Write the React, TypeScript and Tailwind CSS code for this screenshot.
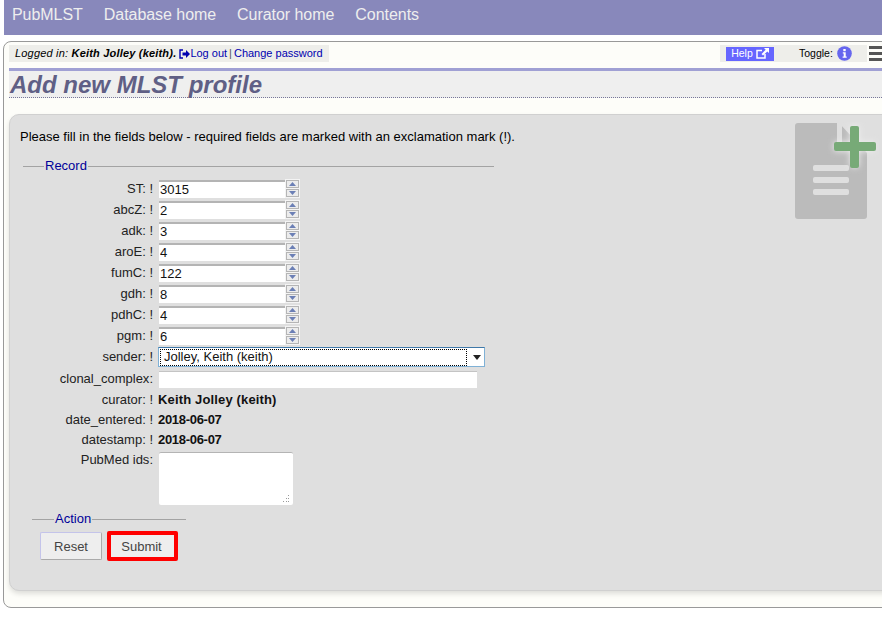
import React from "react";

const FONT = { fontFamily: '"Liberation Sans", Arial, sans-serif' };

function Spin() {
  return (
    <div className="flex h-[19px] w-[15px] flex-col items-center justify-center gap-[1px] bg-[#f4f4f4] px-[1px]">
      <div className="flex h-[8px] w-[13px] items-center justify-center border border-[#b5b5b5] bg-[#ececec]">
        <svg width="7" height="4" viewBox="0 0 7 4"><path d="M3.5 0L7 4H0z" fill="#6b7fb5" /></svg>
      </div>
      <div className="flex h-[8px] w-[13px] items-center justify-center border border-[#b5b5b5] bg-[#ececec]">
        <svg width="7" height="4" viewBox="0 0 7 4"><path d="M0 0h7L3.5 4z" fill="#6b7fb5" /></svg>
      </div>
    </div>
  );
}

function Label({ name, req }: { name: string; req?: boolean }) {
  return (
    <div className="w-[134px] shrink-0 whitespace-pre pr-[4px] text-right text-[#222]">
      {name}:{req ? " !" : ""}
    </div>
  );
}

function NumRow({ name, value }: { name: string; value: string }) {
  return (
    <div className="flex h-[21px] items-center">
      <Label name={name} req />
      <div className="ml-[2px] flex h-[19px] items-center">
        <input
          readOnly
          value={value}
          className="h-[18px] w-[126px] border-t-2 border-[#b4b4b4] bg-white pl-[1px] text-[13px] text-[#111] outline-none"
          style={FONT}
        />
        <Spin />
      </div>
    </div>
  );
}

export default function App() {
  const rows = [
    ["ST", "3015"],
    ["abcZ", "2"],
    ["adk", "3"],
    ["aroE", "4"],
    ["fumC", "122"],
    ["gdh", "8"],
    ["pdhC", "4"],
    ["pgm", "6"],
  ];
  return (
    <div className="relative h-[622px] w-[882px] overflow-hidden bg-white text-[13px]" style={FONT}>
      <nav className="ml-[4px] flex h-[35px] items-start gap-[21px] bg-[#8888bb] pl-[8px] pt-[6px] text-[16px] leading-[18px] tracking-[-0.05px] text-[#eeeeee]">
        <span>PubMLST</span>
        <span>Database home</span>
        <span>Curator home</span>
        <span>Contents</span>
      </nav>

      <div className="ml-[3px] mt-[6px] h-[567px] w-[900px] rounded-[8px] border border-[#999] bg-[#fdfdf9] pl-[5px]">
        <div className="flex h-[22px] w-[878px] items-start pt-[3px]">
          <div className="flex h-[17px] w-[320px] items-center bg-[#eeeeea] pl-[6px] text-[11px]">
            <span className="italic tracking-[0.19px] text-black">
              Logged in: <b>Keith Jolley (keith).</b>
            </span>
            <svg className="ml-[3px]" width="11" height="10" viewBox="0 0 11 10">
              <path d="M4 1H1v8h3" fill="none" stroke="#0000b0" strokeWidth="1.4" />
              <path d="M3.5 3.5H7V1l4 4-4 4V6.500H3.500z" fill="#0000b0" />
            </svg>
            <span className="text-[#0000b0]">Log out</span>
            <span className="mx-[2px] text-[#555]">|</span>
            <span className="text-[#0000b0]">Change password</span>
          </div>
          <div className="ml-[391px] flex h-[17px] w-[147px] items-center bg-[#eeeeea] pl-[6px] text-[10.5px]">
            <div className="flex h-[14px] w-[48px] items-center justify-center gap-[3px] bg-[#6666ff] text-white">
              <span>Help</span>
              <svg width="13" height="11" viewBox="0 0 13 11">
                <path d="M9 6v4H1V2.500h5" fill="none" stroke="#fff" strokeWidth="1.500" />
                <path d="M8 0h5v5l-1.700-1.600L7 7.500 5.500 6l4.200-4.300z" fill="#fff" />
              </svg>
            </div>
            <span className="ml-[25px] text-black">Toggle:</span>
            <svg className="ml-[4px]" width="15" height="15" viewBox="0 0 15 15">
              <circle cx="7.500" cy="7.500" r="7.300" fill="#6666ee" />
              <rect x="6.300" y="3" width="2.400" height="2.200" fill="#fff" />
              <path d="M5.800 6.300h2.900v4.200h1v1.200H5.600v-1.200h1.100v-3H5.800z" fill="#fff" />
            </svg>
          </div>
          <div className="ml-[2px] flex h-[17px] w-[14px] flex-col justify-between py-[1px]">
            <div className="h-[3px] bg-[#555]" />
            <div className="h-[3px] bg-[#555]" />
            <div className="h-[3px] bg-[#555]" />
          </div>
        </div>

        <div className="mt-[4px] h-[30px] border-t-[3px] border-b border-t-[#a0a0d4] border-b-[#777799] bg-[#efefef] [border-bottom-style:dotted]">
          <h1 className="pl-[1px] text-[24px] font-bold italic leading-[27px] text-[#5f5f85]">Add new MLST profile</h1>
        </div>

        <main className="relative mt-[16px] h-[477px] rounded-[10px] border border-[#d0d0d0] bg-[#dfdfdf] pl-[10px] pt-[14px] shadow-[0_3px_5px_rgba(0,0,0,0.12)]">
          <p className="text-[13px] leading-[16px] text-black">
            Please fill in the fields below - required fields are marked with an exclamation mark (!).
          </p>

          <svg className="absolute left-[785px] top-[7px]" width="84" height="101" viewBox="0 0 84 101">
            <defs>
              <filter id="glow" x="-30%" y="-30%" width="160%" height="160%">
                <feGaussianBlur stdDeviation="3" />
              </filter>
            </defs>
            <path d="M3 1h41l28 30v63a3 3 0 0 1-3 3H3a3 3 0 0 1-3-3V4a3 3 0 0 1 3-3z" fill="#bbbbbb" />
            <rect x="18" y="43" width="36" height="6" rx="2" fill="#dfdfdf" />
            <rect x="18" y="55" width="36" height="6" rx="2" fill="#dfdfdf" />
            <rect x="18" y="67" width="36" height="6" rx="2" fill="#dfdfdf" />
            <rect x="42" y="1" width="5" height="28" fill="#dfdfdf" />
            <path d="M39 4h9v16h16v9H48v16h-9V29H23v-9h16z" fill="#eeeeee" filter="url(#glow)" transform="translate(16 0)" />
            <rect x="55" y="4" width="9" height="42" rx="2" fill="#77aa77" />
            <rect x="39" y="20" width="42" height="9" rx="2" fill="#77aa77" />
          </svg>

          <fieldset className="ml-[3px] mt-[14px] w-[471px] border-t border-[#a3a3a3]">
            <legend className="ml-[21px] px-[1px] text-[13px] leading-[14px] text-[#000099]">Record</legend>
            <div className="mt-[5px]">
              {rows.map(([n, v]) => (
                <NumRow key={n} name={n} value={v} />
              ))}
              <div className="flex h-[22px] items-center">
                <Label name="sender" req />
                <div className="ml-[1px] flex h-[20px] w-[327px] items-center border border-[#7fb1d6] border-t-[#3f78a8] bg-white">
                  <div className="ml-[1px] flex h-[17px] w-[307px] items-center border border-dotted border-black pl-[3px] text-[13px] text-[#111]">
                    Jolley, Keith (keith)
                  </div>
                  <svg className="ml-[6px]" width="8" height="5" viewBox="0 0 8 5"><path d="M0 0h8L4 5z" fill="#222" /></svg>
                </div>
              </div>
              <div className="flex h-[22px] items-center">
                <Label name="clonal_complex" />
                <div className="ml-[2px] h-[17px] w-[318px] border-t border-[#c4c4c4] bg-white" />
              </div>
              <div className="flex h-[20px] items-center">
                <Label name="curator" req />
                <b className="ml-[1px] tracking-[0.15px] text-[#111]">Keith Jolley (keith)</b>
              </div>
              <div className="flex h-[20px] items-center">
                <Label name="date_entered" req />
                <b className="ml-[1px] tracking-[-0.3px] text-[#111]">2018-06-07</b>
              </div>
              <div className="flex h-[20px] items-center">
                <Label name="datestamp" req />
                <b className="ml-[1px] tracking-[-0.3px] text-[#111]">2018-06-07</b>
              </div>
              <div className="flex items-start">
                <Label name="PubMed ids" />
                <div className="relative ml-[2px] mt-[2px] h-[53px] w-[134px] rounded-[2px] border-t border-[#b4b4b4] bg-white">
                  <svg className="absolute bottom-[2px] right-[3px]" width="8" height="8" viewBox="0 0 8 8" fill="#9a9a9a">
                    <rect x="6" y="0" width="1" height="1" />
                    <rect x="4" y="3" width="1" height="1" /><rect x="6" y="3" width="1" height="1" />
                    <rect x="1" y="6" width="1" height="1" /><rect x="4" y="6" width="1" height="1" /><rect x="6" y="6" width="1" height="1" />
                  </svg>
                </div>
              </div>
            </div>
          </fieldset>

          <fieldset className="ml-[12px] mt-[7px] w-[154px] border-t border-[#a3a3a3]">
            <legend className="ml-[22px] px-[1px] text-[13px] leading-[14px] text-[#000099]">Action</legend>
            <div className="ml-[8px] mt-[5px] flex items-center gap-[5px]">
              <button className="h-[28px] w-[62px] rounded-[2px] border border-[#c4c4ea] border-b-[#aaa] border-r-[#aaa] bg-[#eeeeee] pt-[2px] text-[13px] text-[#444]" style={FONT}>
                Reset
              </button>
              <button className="h-[30px] w-[71px] rounded-[2px] border-[4px] border-[#ff0000] bg-[#eeeeee] pr-[2px] pt-[2px] text-[13px] text-[#444]" style={FONT}>
                Submit
              </button>
            </div>
          </fieldset>
        </main>
      </div>
    </div>
  );
}
